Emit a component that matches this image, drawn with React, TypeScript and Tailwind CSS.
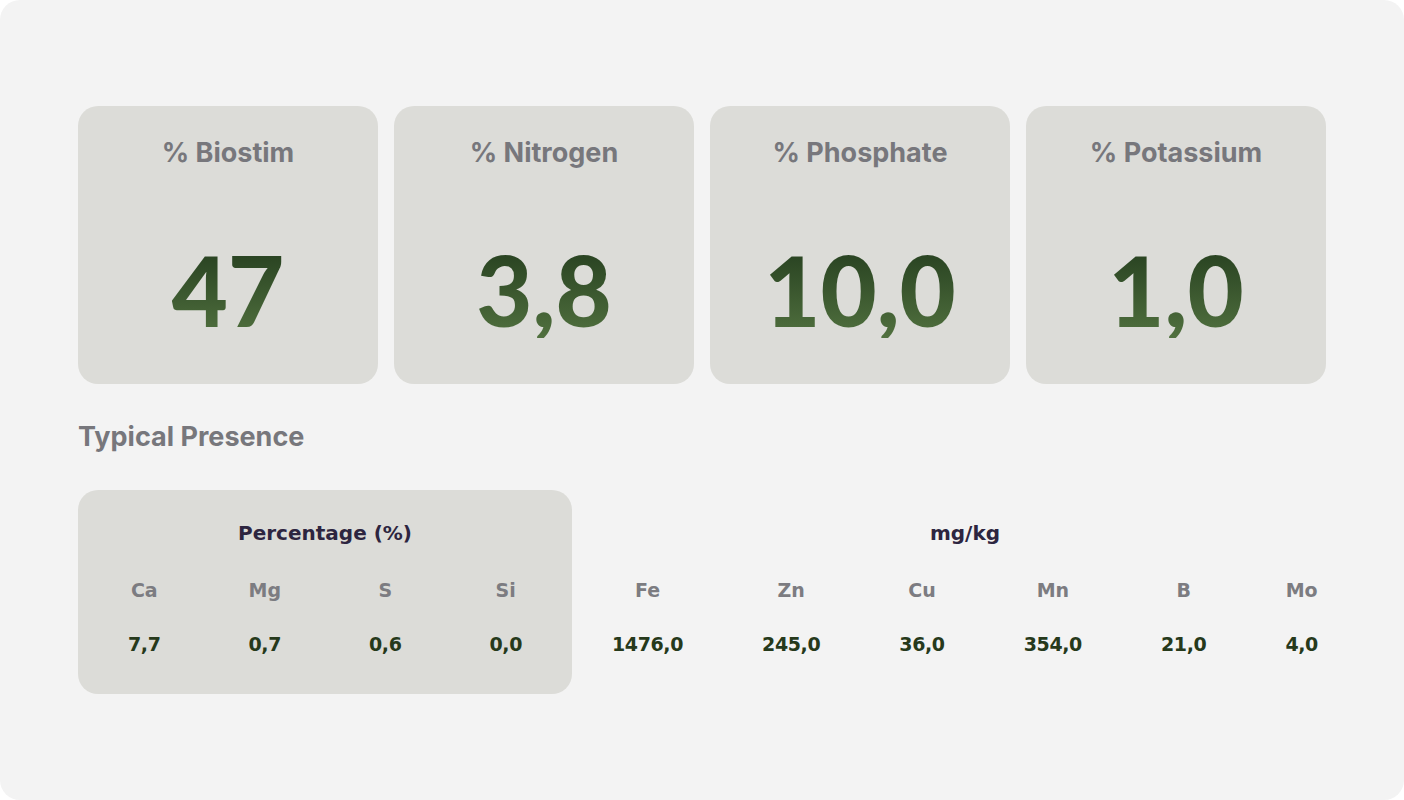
const stats = [
  { label: "% Biostim", value: "47" },
  { label: "% Nitrogen", value: "3,8" },
  { label: "% Phosphate", value: "10,0" },
  { label: "% Potassium", value: "1,0" },
];

const percentage = [
  { el: "Ca", value: "7,7" },
  { el: "Mg", value: "0,7" },
  { el: "S", value: "0,6" },
  { el: "Si", value: "0,0" },
];

const mgkg = [
  { el: "Fe", value: "1476,0" },
  { el: "Zn", value: "245,0" },
  { el: "Cu", value: "36,0" },
  { el: "Mn", value: "354,0" },
  { el: "B", value: "21,0" },
  { el: "Mo", value: "4,0" },
];

const inter = "font-['Inter','Noto_Sans',sans-serif]";
const geo = "font-['DejaVu_Sans','Noto_Sans',sans-serif]";

function ElementGroup({ title, items }: { title: string; items: { el: string; value: string }[] }) {
  return (
    <div className="flex flex-col">
      <div className={`${geo} text-center text-[20px] font-bold leading-7 text-[#2d2540]`}>{title}</div>
      <div className="mt-[29px] flex justify-between">
        {items.map((item) => (
          <div key={item.el} className="flex flex-col items-center">
            <span className={`${geo} text-[19px] font-bold leading-7 text-[#7c7c81]`}>{item.el}</span>
            <span className={`${geo} mt-[26px] text-[19px] font-bold leading-7 tracking-[-0.02em] text-[#26391b]`}>
              {item.value}
            </span>
          </div>
        ))}
      </div>
    </div>
  );
}

export default function App() {
  return (
    <div className="h-[800px] w-[1404px] rounded-[20px] bg-[#f3f3f3] px-[78px] pt-[106px]">
      <div className="grid grid-cols-4 gap-4">
        {stats.map((stat) => (
          <div key={stat.label} className="flex h-[278px] flex-col items-center rounded-[20px] bg-[#dcdcd8] pt-[29px]">
            <div className={`${inter} text-[27px] font-bold leading-9 text-[#77777c]`}>{stat.label}</div>
            <div
              className="mt-[70px] bg-gradient-to-b from-[#243d1e] to-[#51713f] bg-clip-text font-['Lato','Noto_Sans',sans-serif] text-[97px] font-black leading-none text-transparent"
            >
              {stat.value}
            </div>
          </div>
        ))}
      </div>

      <div className={`${inter} mt-[35px] text-[27px] font-bold leading-9 text-[#77777c]`}>Typical Presence</div>

      <div className="mt-[35px] flex">
        <div className="h-[204px] w-[494px] rounded-[20px] bg-[#dcdcd8] px-[50px] pt-[29px]">
          <ElementGroup title="Percentage (%)" items={percentage} />
        </div>
        <div className="flex-1 pl-[40px] pr-[8px] pt-[29px]">
          <ElementGroup title="mg/kg" items={mgkg} />
        </div>
      </div>
    </div>
  );
}
